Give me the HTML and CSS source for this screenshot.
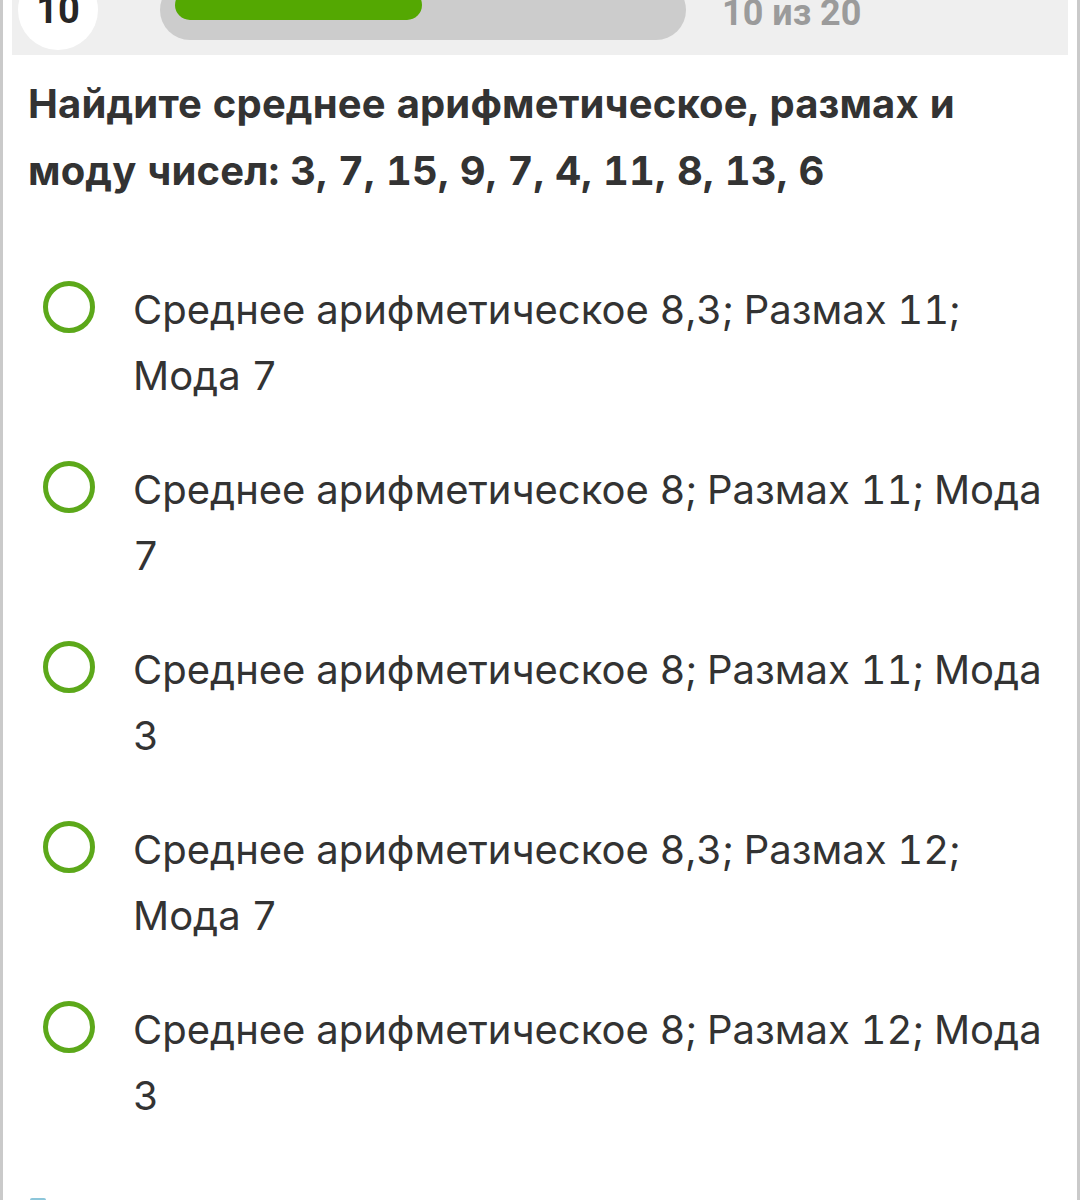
FILE: index.html
```html
<!DOCTYPE html>
<html lang="ru">
<head>
<meta charset="utf-8">
<title>Вопрос 10</title>
<link rel="stylesheet" href="styles.css">
</head>
<body>
<div class="page">
  <header class="quiz-header">
    <div class="num-badge">10</div>
    <div class="progress-track"><div class="progress-fill" style="width:247px"></div></div>
    <div class="counter">10 из 20</div>
  </header>
  <h1 class="question">Найдите среднее арифметическое, размах и моду чисел: 3, 7, 15, 9, 7, 4, 11, 8, 13, 6</h1>
  <ul class="options">
    <li class="option"><span class="radio"></span><span class="label">Среднее арифметическое 8,3; Размах 11; Мода 7</span></li>
    <li class="option"><span class="radio"></span><span class="label">Среднее арифметическое 8; Размах 11; Мода 7</span></li>
    <li class="option"><span class="radio"></span><span class="label">Среднее арифметическое 8; Размах 11; Мода 3</span></li>
    <li class="option"><span class="radio"></span><span class="label">Среднее арифметическое 8,3; Размах 12; Мода 7</span></li>
    <li class="option"><span class="radio"></span><span class="label">Среднее арифметическое 8; Размах 12; Мода 3</span></li>
  </ul>
  <div class="next-hint"></div>
</div>
</body>
</html>
```
FILE: styles.css
```css
html, body {
  margin: 0;
  padding: 0;
  background: #ffffff;
}
body {
  overflow: hidden;
  height: 1200px;
}
.page {
  margin-top: -40px;
  border-left: 3px solid #cacaca;
  border-right: 3px solid #cacaca;
  padding: 0 9px;
  min-height: 1300px;
  box-sizing: border-box;
}
.quiz-header {
  height: 95px;
  background: #efefef;
  display: flex;
  align-items: center;
  padding-top: 5px;
  box-sizing: border-box;
}
.num-badge {
  width: 80px;
  height: 80px;
  margin-left: 6px;
  border-radius: 50%;
  background: #ffffff;
  display: flex;
  align-items: center;
  justify-content: center;
  font-family: Roboto, "Liberation Sans", sans-serif;
  font-weight: 700;
  font-size: 38px;
  color: #262626;
  flex: none;
}
.progress-track {
  width: 526px;
  height: 60px;
  margin-left: 62px;
  border-radius: 30px;
  background: #cccccc;
  padding: 0 15px;
  box-sizing: border-box;
  display: flex;
  align-items: flex-start;
  flex: none;
}
.progress-fill {
  height: 30px;
  margin-top: 10px;
  border-radius: 15px;
  background: #54a802;
}
.counter {
  margin-left: 36px;
  margin-top: 6px;
  font-family: Roboto, "Liberation Sans", sans-serif;
  font-weight: 700;
  font-size: 36px;
  color: #9b9b9b;
  white-space: nowrap;
}
.question {
  margin: 15px 18px 0 16px;
  font-family: Inter, "Noto Sans", sans-serif;
  font-weight: 700;
  font-size: 40px;
  line-height: 67px;
  color: #333333;
  letter-spacing: 0.15px;
  font-feature-settings: "tnum" 1;
}
.options {
  list-style: none;
  margin: 73px 0 0 0;
  padding: 0;
  display: flex;
  flex-direction: column;
  gap: 48px;
}
.option {
  display: flex;
  align-items: flex-start;
  padding: 0 12px 0 31px;
}
.radio {
  flex: none;
  width: 52px;
  height: 52px;
  margin-top: 4px;
  border: 5px solid #5ca81a;
  border-radius: 50%;
  box-sizing: border-box;
}
.label {
  margin-left: 38px;
  font-family: Inter, "Noto Sans", sans-serif;
  font-size: 40px;
  line-height: 66px;
  color: #333333;
  font-feature-settings: "tnum" 1;
}
.next-hint {
  margin: 69px 0 0 18px;
  width: 16px;
  height: 6px;
  background: #8cc6da;
  border-radius: 2px;
}
```
